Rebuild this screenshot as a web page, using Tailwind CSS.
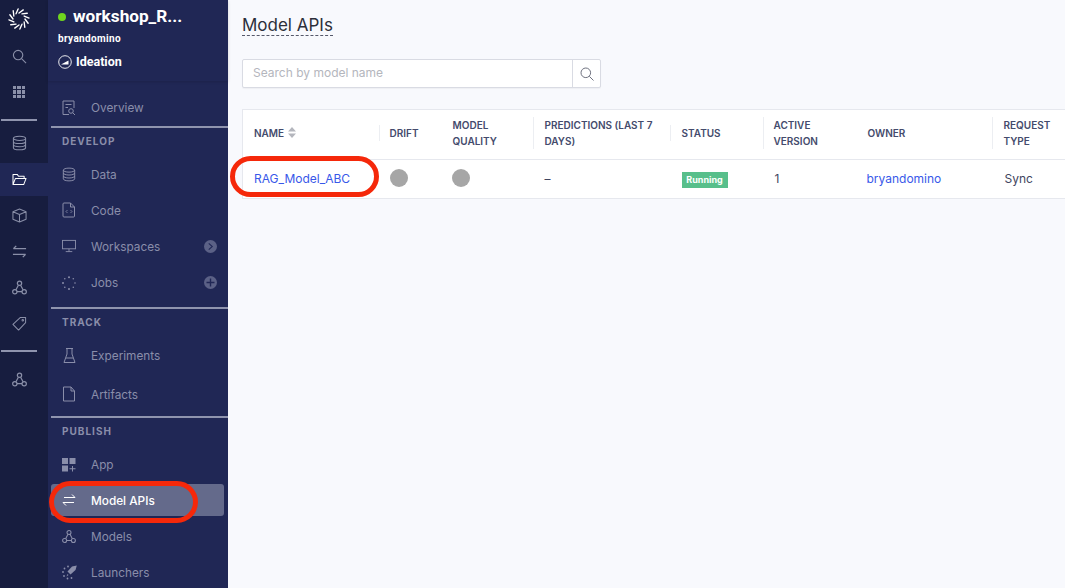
<!DOCTYPE html>
<html lang="en">
<head>
    <meta charset="UTF-8">
    <title>Model APIs</title>
    <script src="https://cdn.jsdelivr.net/npm/@tailwindcss/browser@4"></script>
</head>
<body class="w-[1065px] h-[588px] overflow-hidden relative flex bg-[#f8f9fd] font-['Inter','Liberation_Sans',sans-serif]">

    <!-- Icon rail -->
    <aside class="w-12 h-full shrink-0 bg-[#171d3f] flex flex-col text-[#8a8fa8]">
        <div class="h-[38px] pr-[10px] flex items-center justify-center">
            <svg class="w-[22px] h-[22px] text-white" viewBox="0 0 24 24" fill="none" stroke="currentColor" stroke-width="1.5" stroke-linecap="round">
                <path d="M18.5 12 21.970 16.650M17.630 15.250 18.310 21.010M15.250 17.630 12.960 22.960M12 18.500 7.350 21.970M8.750 17.630 2.990 18.310M6.370 15.250 1.040 12.960M5.500 12 2.030 7.350M6.370 8.750 5.690 2.990M8.750 6.370 11.040 1.040M12 5.500 16.650 2.030M15.250 6.370 21.010 5.690M17.630 8.750 22.960 10.960"/>
            </svg>
        </div>
        <div class="h-[36px] pr-[10px] flex items-center justify-center">
            <svg class="w-[15px] h-[15px]" viewBox="0 0 16 16" fill="none" stroke="currentColor" stroke-width="1.2"><circle cx="6.500" cy="6.500" r="5"/><path d="M10.200 10.200 15 15"/></svg>
        </div>
        <div class="h-[36px] pr-[10px] flex items-center justify-center">
            <div class="grid grid-cols-3 gap-[1px]">
                <i class="block w-[3.5px] h-[3.5px] bg-current"></i><i class="block w-[3.5px] h-[3.5px] bg-current"></i><i class="block w-[3.5px] h-[3.5px] bg-current"></i>
                <i class="block w-[3.5px] h-[3.5px] bg-current"></i><i class="block w-[3.5px] h-[3.5px] bg-current"></i><i class="block w-[3.5px] h-[3.5px] bg-current"></i>
                <i class="block w-[3.5px] h-[3.5px] bg-current"></i><i class="block w-[3.5px] h-[3.5px] bg-current"></i><i class="block w-[3.5px] h-[3.5px] bg-current"></i>
            </div>
        </div>
        <div class="w-[36px] h-[2px] mt-[9px] ml-[1px] bg-[#8f94ae]"></div>
        <div class="h-[42px] pt-[2px] pr-[10px] flex items-center justify-center">
            <svg class="w-[15px] h-[16px]" viewBox="0 0 16 16" fill="none" stroke="currentColor" stroke-width="1.1"><ellipse cx="8" cy="3" rx="6.500" ry="2.300"/><path d="M1.500 3v10c0 1.300 2.900 2.300 6.500 2.300s6.500-1 6.500-2.300V3M1.500 6.300c0 1.300 2.900 2.300 6.500 2.300s6.500-1 6.500-2.300M1.500 9.700c0 1.300 2.900 2.300 6.500 2.300s6.500-1 6.500-2.300"/></svg>
        </div>
        <div class="h-[33px] pr-[10px] bg-[#202755] flex items-center justify-center text-white">
            <svg class="w-[15px] h-[13px]" viewBox="0 0 16 14" fill="none" stroke="currentColor" stroke-width="1.1" stroke-linejoin="round"><path d="M1 12.500V1.500h4.500l1.500 2h6v2.500M1 12.500h11.500L15 6H3.500Z"/></svg>
        </div>
        <div class="h-[36px] mt-[1px] pr-[10px] flex items-center justify-center">
            <svg class="w-[15px] h-[15px]" viewBox="0 0 16 16" fill="none" stroke="currentColor" stroke-width="1.1" stroke-linejoin="round"><path d="M8 1 15 4v8l-7 3-7-3V4ZM1 4l7 3 7-3M8 7v8"/></svg>
        </div>
        <div class="h-[36px] pr-[10px] flex items-center justify-center">
            <svg class="w-[15px] h-[15px]" viewBox="0 0 16 16" fill="none" stroke="currentColor" stroke-width="1.4"><path d="M15 5H1.500M4.500 2 1.500 5M1 11h13.500M11.500 14l3-3"/></svg>
        </div>
        <div class="h-[36px] pr-[10px] flex items-center justify-center">
            <svg class="w-[15px] h-[15px]" viewBox="0 0 16 16" fill="none" stroke="currentColor" stroke-width="1.3"><circle cx="8" cy="3.500" r="2.300"/><circle cx="3" cy="12.500" r="2.300"/><circle cx="13" cy="12.500" r="2.300"/><path d="M6.800 5.500 4.200 10.500M9.200 5.500 11.800 10.500M5.300 12.500h5.400"/></svg>
        </div>
        <div class="h-[36px] pr-[10px] flex items-center justify-center">
            <svg class="w-[15px] h-[15px]" viewBox="0 0 16 16" fill="none" stroke="currentColor" stroke-width="1.1" stroke-linejoin="round"><path d="M9 1.500h5.500V7L7 15 1 9Z"/><circle cx="11.500" cy="4.500" r=".8"/></svg>
        </div>
        <div class="w-[36px] h-[2px] mt-[9px] ml-[1px] bg-[#8f94ae]"></div>
        <div class="h-[54px] pr-[10px] flex items-center justify-center">
            <svg class="w-[15px] h-[15px]" viewBox="0 0 16 16" fill="none" stroke="currentColor" stroke-width="1.3"><circle cx="8" cy="3.500" r="2.300"/><circle cx="3" cy="12.500" r="2.300"/><circle cx="13" cy="12.500" r="2.300"/><path d="M6.800 5.500 4.200 10.500M9.200 5.500 11.800 10.500M5.300 12.500h5.400"/></svg>
        </div>
    </aside>

    <!-- Project panel -->
    <nav class="w-[180px] h-full shrink-0 bg-[#202755] text-[#8a8eaa] text-[11.8px]">
        <header class="h-[81px] pl-[10px] shadow-[0_1px_3px_rgba(0,0,0,0.15)] text-white">
            <div class="flex items-center gap-[7px] pt-[4px] h-[30px]">
                <span class="w-2 h-2 rounded-full bg-[#6fd41f]"></span>
                <span class="font-['Roboto',sans-serif] font-bold text-[17.2px]">workshop_R...</span>
            </div>
            <div class="font-['Roboto',sans-serif] font-bold text-[10px] tracking-[0.35px] mt-[2px] leading-[14px]">bryandomino</div>
            <div class="flex items-center gap-[4px] mt-[8px] h-[16px]">
                <svg class="w-[14px] h-[14px]" viewBox="0 0 14 14" fill="none"><circle cx="7" cy="7" r="6.300" stroke="currentColor" stroke-width="0.900"/><path d="M3 9.500 10.500 5.500v4Z" fill="currentColor"/></svg>
                <span class="font-['Roboto',sans-serif] font-bold text-[12.5px]">Ideation</span>
            </div>
        </header>

        <a class="h-[36px] mt-[9px] pl-[14px] flex items-center gap-[15px]">
            <svg class="w-[14px] h-[16px] shrink-0" viewBox="0 0 14 16" fill="none" stroke="currentColor" stroke-width="1"><path d="M7 14.500H1V1h11v7M3.500 4.500h6M3.500 7.500h2.500"/><circle cx="9" cy="11" r="2.300"/><path d="M10.700 12.700 13 15"/></svg>
            <span class="pt-[2px]">Overview</span>
        </a>
        <div class="h-[2px] ml-[3px] bg-[#8f94ae]"></div>
        <div class="h-[26px] mb-[2px] pl-[14px] flex items-center text-[10px] font-bold tracking-[1px]">DEVELOP</div>

        <a class="h-[36px] pl-[14px] flex items-center gap-[15px]">
            <svg class="w-[14px] h-[15px] shrink-0" viewBox="0 0 16 16" fill="none" stroke="currentColor" stroke-width="1.100"><ellipse cx="8" cy="3" rx="6.500" ry="2.300"/><path d="M1.500 3v10c0 1.300 2.900 2.300 6.500 2.300s6.500-1 6.500-2.300V3M1.500 6.300c0 1.300 2.900 2.300 6.500 2.300s6.500-1 6.500-2.300M1.500 9.700c0 1.300 2.900 2.300 6.500 2.300s6.500-1 6.500-2.300"/></svg>
            <span class="pt-[3px]">Data</span>
        </a>
        <a class="h-[36px] pl-[14px] flex items-center gap-[15px]">
            <svg class="w-[14px] h-[16px] shrink-0" viewBox="0 0 14 16" fill="none" stroke="currentColor" stroke-width="1"><path d="M2 1h6.500l4 4v9a1 1 0 0 1-1 1H2a1 1 0 0 1-1-1V2a1 1 0 0 1 1-1ZM8.500 1v4h4"/><path d="M5.500 8 4 9.500 5.500 11M8.500 8 10 9.500 8.500 11" stroke-width=".8"/></svg>
            <span class="pt-[3px]">Code</span>
        </a>
        <a class="h-[36px] pl-[14px] flex items-center gap-[15px]">
            <svg class="w-[14px] h-[14px] shrink-0" viewBox="0 0 15 14" fill="none" stroke="currentColor" stroke-width="1"><rect x=".5" y="1" width="14" height="9"/><path d="M7.500 10v3M4 13h7"/></svg>
            <span class="flex-1 pt-[3px]">Workspaces</span>
            <span class="w-[13px] h-[13px] mr-[11px] rounded-full bg-[#5b6186] flex items-center justify-center">
                <svg class="w-[7px] h-[7px] text-[#202755]" viewBox="0 0 8 8" fill="none" stroke="currentColor" stroke-width="1.200"><path d="M2 .5 6 4 2 7.500"/></svg>
            </span>
        </a>
        <a class="h-[37px] pl-[14px] flex items-center gap-[15px]">
            <svg class="w-[14px] h-[14px] shrink-0" viewBox="0 0 14 14" fill="currentColor"><circle cx="7" cy="1.200" r="1"/><circle cx="11.300" cy="2.800" r=".8"/><circle cx="13" cy="7" r=".8"/><circle cx="11.300" cy="11.300" r=".8"/><circle cx="7" cy="13" r="1"/><circle cx="2.800" cy="11.300" r=".8"/><circle cx="1" cy="7" r="1"/><circle cx="2.800" cy="2.800" r=".8"/></svg>
            <span class="flex-1 pt-[3px]">Jobs</span>
            <span class="w-[13px] h-[13px] mr-[11px] rounded-full bg-[#5b6186] flex items-center justify-center">
                <svg class="w-[9px] h-[9px] text-[#202755]" viewBox="0 0 9 9" fill="none" stroke="currentColor" stroke-width="1.400"><path d="M4.500 .5v8M.5 4.500h8"/></svg>
            </span>
        </a>
        <div class="h-[2px] ml-[3px] mt-[6px] bg-[#8f94ae]"></div>
        <div class="h-[27px] pl-[14px] flex items-center text-[10px] font-bold tracking-[1px]">TRACK</div>

        <a class="h-[39px] pl-[14px] flex items-center gap-[15px]">
            <svg class="w-[13px] h-[15px] ml-[1px] shrink-0" viewBox="0 0 13 15" fill="none" stroke="currentColor" stroke-width="1"><path d="M3 .5h7M4 .5v5.500L1 14.500h11L9 6V.5M3 10h7"/></svg>
            <span class="pt-[2px]">Experiments</span>
        </a>
        <a class="h-[38px] pl-[14px] flex items-center gap-[15px]">
            <svg class="w-[14px] h-[16px] shrink-0" viewBox="0 0 14 16" fill="none" stroke="currentColor" stroke-width="1"><path d="M1.500 1h7.500l3.500 4v10h-11ZM9 1v4h3.500"/></svg>
            <span class="pt-[3px]">Artifacts</span>
        </a>
        <div class="h-[2px] ml-[3px] mt-[3px] bg-[#8f94ae]"></div>
        <div class="h-[26px] pl-[14px] flex items-center text-[10px] font-bold tracking-[1px]">PUBLISH</div>

        <a class="h-[40px] pt-[2px] pl-[14px] flex items-center gap-[15px]">
            <svg class="w-[14px] h-[14px] shrink-0" viewBox="0 0 14 14" fill="currentColor"><rect width="6" height="6"/><rect x="7.500" width="6" height="6"/><rect y="7.500" width="6" height="6"/><path d="M10 8h1v2.200h2.500v1H11v2.300h-1v-2.300H7.500v-1H10Z"/></svg>
            <span class="pt-[2px]">App</span>
        </a>
        <a class="h-[32px] ml-[3px] mr-[4px] pl-[11px] rounded-[3px] bg-[#646a8b] text-white font-medium flex items-center gap-[15px]">
            <svg class="w-[14px] h-[12px] shrink-0" viewBox="0 0 14 12" fill="none" stroke="currentColor" stroke-width="1"><path d="M2 3.500h11M10 .5l3 3M12 8.500H1M4 11.500l-3-3"/></svg>
            <span class="pt-[3px]">Model APIs</span>
        </a>
        <a class="h-[40px] pl-[14px] flex items-center gap-[15px]">
            <svg class="w-[14px] h-[15px] shrink-0" viewBox="0 0 16 16" fill="none" stroke="currentColor" stroke-width="1.200"><circle cx="8" cy="3.500" r="2.300"/><circle cx="3" cy="12.500" r="2.300"/><circle cx="13" cy="12.500" r="2.300"/><path d="M6.800 5.500 4.200 10.500M9.200 5.500 11.800 10.500M5.300 12.500h5.400"/></svg>
            <span class="pt-[3px]">Models</span>
        </a>
        <a class="h-[32px] pl-[14px] flex items-center gap-[14px]">
            <svg class="w-[15px] h-[15px] shrink-0" viewBox="0 0 15 15" fill="currentColor"><path d="M14.800.5 10 1.500 5.500 6.500l3 3 5-4.500Z"/><path d="M5.500 9l1 1-2 1.500Z"/><circle cx="6" cy="1.500" r=".9"/><circle cx="2.500" cy="3.500" r=".9"/><circle cx="1" cy="7" r=".9"/><circle cx="2" cy="11" r=".9"/><circle cx="5.500" cy="13.500" r=".9"/><circle cx="9.500" cy="13" r=".9"/></svg>
            <span class="pt-[3px]">Launchers</span>
        </a>
    </nav>

    <!-- Main content -->
    <main class="flex-1 min-w-0 pl-[14px] pt-[14px] overflow-hidden">
        <h1 class="w-fit h-[22px] text-[17px] leading-[22px] text-[#2c2f3a] border-b border-dashed border-[#55586a]">Model APIs</h1>

        <div class="w-[359px] h-[29px] mt-[23px] flex bg-white border border-[#d9dbe3] rounded-[2px] shadow-[0_1px_1px_rgba(0,0,0,0.04)]">
            <div class="flex-1 pl-[10px] pb-[1px] flex items-center text-[12px] text-[#b4b6bd] border-r border-[#d9dbe3]">Search by model name</div>
            <div class="w-[27px] flex items-center justify-center text-[#6f7280]">
                <svg class="w-[14px] h-[14px]" viewBox="0 0 14 14" fill="none" stroke="currentColor" stroke-width="1"><circle cx="5.800" cy="5.800" r="4.800"/><path d="M9.300 9.300 13.500 13.500"/></svg>
            </div>
        </div>

        <table class="w-[860px] table-fixed mt-[21px] bg-white border-y border-l border-[#e6e8ee] border-collapse text-[12px] text-[#3f4560]">
            <colgroup>
                <col class="w-[136px]"><col class="w-[61px]"><col class="w-[93px]"><col class="w-[137px]"><col class="w-[93px]"><col class="w-[93px]"><col class="w-[136px]"><col class="w-[111px]">
            </colgroup>
            <thead>
                <tr class="h-[50px] border-b border-[#e6e8ee] text-left text-[10px] leading-[16px] font-semibold text-[#444b6c]">
                    <th class="font-semibold pl-[11px] pb-[4px]">
                        <span class="flex items-center gap-[4px]">NAME
                            <svg class="w-[8px] h-[11px] text-[#b4b6bd]" viewBox="0 0 8 11" fill="currentColor"><path d="M4 0 8 4.500H0ZM4 11 0 6.500h8Z"/></svg>
                        </span>
                    </th>
                    <th class="font-semibold pb-[4px]"><span class="block pl-[10px] border-l border-[#eceef2]">DRIFT</span></th>
                    <th class="font-semibold pl-[13px] pb-[4px]">MODEL QUALITY</th>
                    <th class="font-semibold pb-[4px]"><span class="block pl-[11px] border-l border-[#eceef2]">PREDICTIONS (LAST 7 DAYS)</span></th>
                    <th class="font-semibold pb-[4px]"><span class="block pl-[11px] border-l border-[#eceef2]">STATUS</span></th>
                    <th class="font-semibold pb-[4px]"><span class="block pl-[10px] border-l border-[#eceef2]">ACTIVE VERSION</span></th>
                    <th class="font-semibold pl-[12px] pb-[4px]">OWNER</th>
                    <th class="font-semibold pb-[4px]"><span class="block w-[70px] pl-[11px] border-l border-[#eceef2]">REQUEST TYPE</span></th>
                </tr>
            </thead>
            <tbody>
                <tr class="h-[39px]">
                    <td class="pl-[11px] text-[#3858e9]">RAG_Model_ABC</td>
                    <td class="pl-[11px] pb-[2px]"><span class="block w-[18px] h-[18px] rounded-full bg-[#a6a6a6]"></span></td>
                    <td class="pl-[12px] pb-[2px]"><span class="block w-[18px] h-[18px] rounded-full bg-[#a6a6a6]"></span></td>
                    <td class="pl-[12px]">–</td>
                    <td class="pl-[12px]"><span class="inline-flex items-center justify-center w-[46px] h-[16px] bg-[#58bf8b] text-white text-[9px] font-bold">Running</span></td>
                    <td class="pl-[12px]">1</td>
                    <td class="pl-[11px] text-[#3858e9]">bryandomino</td>
                    <td class="pl-[13px]">Sync</td>
                </tr>
            </tbody>
        </table>
    </main>

    <!-- Red annotation rings -->
    <div class="absolute left-[230px] top-[156px] w-[149px] h-[41px] rounded-[21px] border-[5px] border-[#f5280a] blur-[0.4px]"></div>
    <div class="absolute left-[49px] top-[481px] w-[149px] h-[42px] rounded-[21px] border-[5px] border-[#f5280a] blur-[0.4px]"></div>
</body>
</html>
